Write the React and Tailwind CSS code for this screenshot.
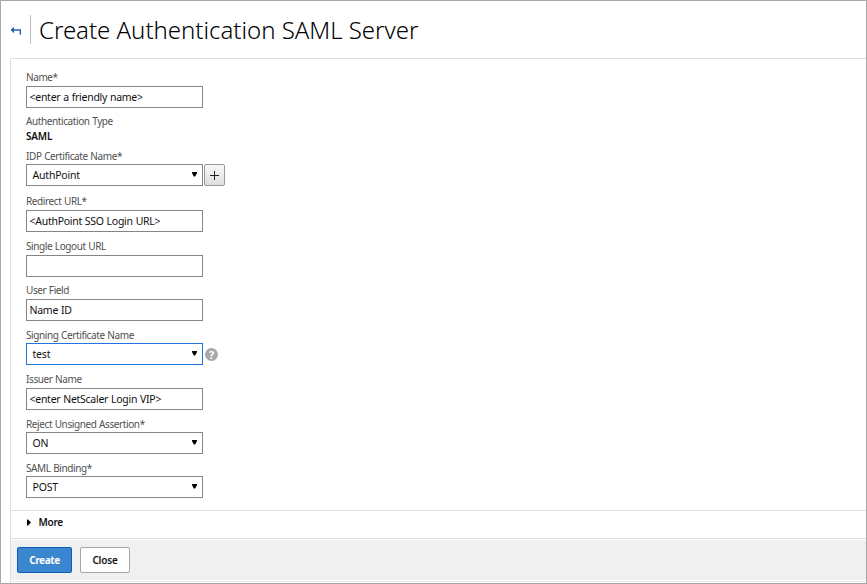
function Label({ children }) {
  return (
    <div className="h-4 whitespace-nowrap text-[10px] leading-4 tracking-[-0.4px] [word-spacing:0.4px] text-[#505050]">{children}</div>
  );
}

function TextField({ label, value, className = "" }) {
  return (
    <div className={className}>
      <Label>{label}</Label>
      <div className="mt-px flex h-[22px] w-[177px] items-center border border-[#858585] bg-white pb-px pl-[2.5px]">
        <span className="whitespace-nowrap text-[10.5px] leading-4 tracking-[-0.27px] [word-spacing:0.4px] text-[#111]">{value}</span>
      </div>
    </div>
  );
}

function SelectField({ label, value, className = "", focused = false, children }) {
  return (
    <div className={className}>
      <Label>{label}</Label>
      <div className="flex h-[22px] items-center">
        <div
          className={`flex h-[22px] w-[177px] items-center justify-between border bg-white pr-[5px] pl-[5.5px] ${
            focused ? "border-[#2474e0]" : "border-[#858585]"
          }`}
        >
          <span className="text-[10.5px] leading-4 tracking-[-0.2px] text-[#111]">{value}</span>
          <svg width="5" height="5" viewBox="0 0 5 5" className="mb-px">
            <path d="M0 0H5V1L3.2 4.6H1.8L0 1Z" fill="#000" />
          </svg>
        </div>
        {children}
      </div>
    </div>
  );
}

export default function App() {
  return (
    <div className="flex h-[584px] w-[867px] flex-col overflow-hidden border border-[#a9a9a9] bg-white font-['Noto_Sans','Open_Sans',sans-serif]">
      <header className="flex h-[57px] shrink-0 items-start pt-[14px] pl-[9px]">
        <svg width="12" height="9" viewBox="0 0 12 9" className="mt-[11px]" fill="none">
          <path d="M2 4H10.3V8.4" stroke="#2463b8" strokeWidth="1.5" />
          <path d="M0.5 4L4 0.8V7.2Z" fill="#2463b8" />
        </svg>
        <div className="ml-2 h-[29px] w-px bg-[#bdbdbd]" />
        <h1 className="ml-2 text-[24px] leading-[30px] font-light tracking-[-0.02px] whitespace-nowrap text-black">
          Create Authentication SAML Server
        </h1>
      </header>

      <main className="ml-[9px] flex grow flex-col border-t border-l border-[#dedede]">
        <section className="h-[451px] shrink-0 pt-[10px] pl-[15px]">
          <TextField label="Name*" value="<enter a friendly name>" />
          <div className="mt-[5px]">
            <Label>Authentication Type</Label>
            <div className="-mt-px h-4 text-[10px] leading-4 font-semibold tracking-[-0.2px] text-[#111]">SAML</div>
          </div>
          <SelectField label="IDP Certificate Name*" value="AuthPoint" className="mt-1">
            <div className="ml-px flex h-[22px] w-[21px] items-center justify-center rounded-[2px] border border-[#999] bg-gradient-to-b from-[#f8f8f8] to-[#dedede]">
              <svg width="9" height="9" viewBox="0 0 9 9">
                <path d="M4.5 0V9M0 4.5H9" stroke="#222" strokeWidth="1" />
              </svg>
            </div>
          </SelectField>
          <TextField label="Redirect URL*" value="<AuthPoint SSO Login URL>" className="mt-[7px]" />
          <TextField label="Single Logout URL" value="" className="mt-[6px]" />
          <TextField label="User Field" value="Name ID" className="mt-[5px]" />
          <SelectField label="Signing Certificate Name" value="test" focused className="mt-[6px]">
            <div className="ml-[2px] flex h-[13px] w-[13px] items-center justify-center rounded-full bg-[#a8a8a8] text-[11px] leading-[13px] font-bold text-white">
              ?
            </div>
          </SelectField>
          <TextField label="Issuer Name" value="<enter NetScaler Login VIP>" className="mt-[6px]" />
          <SelectField label="Reject Unsigned Assertion*" value="ON" className="mt-[6px]" />
          <SelectField label="SAML Binding*" value="POST" className="mt-[6px]" />
        </section>

        <section className="flex h-[28px] shrink-0 items-center border-t border-[#dedede] pb-[5px] pl-4">
          <svg width="4" height="7" viewBox="0 0 4 7">
            <path d="M0 0.5H1L4 3.5L1 6.5H0Z" fill="#000" />
          </svg>
          <span className="ml-[7.5px] text-[10px] leading-4 font-semibold tracking-[-0.25px] text-[#111]">More</span>
        </section>

        <footer className="h-[42px] shrink-0 border-t border-[#dedede] pt-px">
          <div className="flex h-10 items-center gap-2 bg-[#f0f0f0] pl-[6px]">
            <button className="h-[26px] w-[55px] rounded-[2px] border border-[#1059b5] bg-[#3a87d0] text-[10px] font-bold tracking-[-0.4px] text-white">
              Create
            </button>
            <button className="h-[26px] w-[50px] rounded-[2px] border border-[#a5a5a5] bg-white text-[10px] font-semibold tracking-[-0.2px] text-[#111]">
              Close
            </button>
          </div>
        </footer>
        <div className="mt-px h-px bg-[#e6e6e6]" />
      </main>
    </div>
  );
}
